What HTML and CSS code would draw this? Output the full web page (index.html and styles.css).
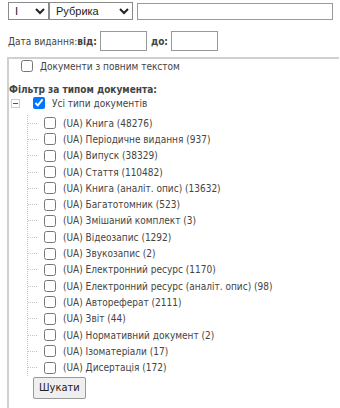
FILE: index.html
```html
<!DOCTYPE html>
<html>
<head>
	<meta charset="utf-8">
	<title>Пошук</title>
	<link rel="stylesheet" href="styles.css">
</head>
<body>
	<form class="search">
		<div class="search__row">
			<select class="search__field"><option>І</option></select>
			<select class="search__kind"><option>Рубрика</option></select>
			<input type="text" class="search__query">
		</div>

		<div class="search__dates">
			<span>Дата видання:</span><b>від:</b>
			<input type="text" class="search__date">
			<b>до:</b>
			<input type="text" class="search__date">
		</div>

		<fieldset class="filter">
			<label class="filter__full"><input type="checkbox"> Документи з повним текстом</label>
			<div class="filter__title">Фільтр за типом документа:</div>

			<div class="tree">
				<div class="tree__root">
					<svg class="tree__toggle" width="9" height="9" viewBox="0 0 9 9">
						<rect x="0.5" y="0.5" width="8" height="8" fill="#fff" stroke="#999" stroke-dasharray="1 1"/>
						<path d="M2 4.5h5" stroke="#555"/>
					</svg>
					<label><input type="checkbox" checked> Усі типи документів</label>
				</div>
				<ul class="tree__list">
					<li><label><input type="checkbox"> (UA) Книга (48276)</label></li>
					<li><label><input type="checkbox"> (UA) Періодичне видання (937)</label></li>
					<li><label><input type="checkbox"> (UA) Випуск (38329)</label></li>
					<li><label><input type="checkbox"> (UA) Стаття (110482)</label></li>
					<li><label><input type="checkbox"> (UA) Книга (аналіт. опис) (13632)</label></li>
					<li><label><input type="checkbox"> (UA) Багатотомник (523)</label></li>
					<li><label><input type="checkbox"> (UA) Змішаний комплект (3)</label></li>
					<li><label><input type="checkbox"> (UA) Відеозапис (1292)</label></li>
					<li><label><input type="checkbox"> (UA) Звукозапис (2)</label></li>
					<li><label><input type="checkbox"> (UA) Електронний ресурс (1170)</label></li>
					<li><label><input type="checkbox"> (UA) Електронний ресурс (аналіт. опис) (98)</label></li>
					<li><label><input type="checkbox"> (UA) Автореферат (2111)</label></li>
					<li><label><input type="checkbox"> (UA) Звіт (44)</label></li>
					<li><label><input type="checkbox"> (UA) Нормативний документ (2)</label></li>
					<li><label><input type="checkbox"> (UA) Ізоматеріали (17)</label></li>
					<li><label><input type="checkbox"> (UA) Дисертація (172)</label></li>
				</ul>
			</div>

			<button type="button" class="filter__submit">Шукати</button>
		</fieldset>
	</form>
</body>
</html>
```

FILE: styles.css
```css
body {
	font-family: "DejaVu Sans Condensed", "DejaVu Sans", sans-serif;
	font-size: 10px;
	color: #444;
	background-color: #fff;
	margin: 0;
	overflow: hidden;
}

.search__row {
	display: flex;
	align-items: center;
	padding: 2px 0 0 8px;
}

select, input[type=text] {
	font-family: "Liberation Sans", sans-serif;
	font-size: 11px;
	color: #222;
	box-sizing: border-box;
	margin: 0;
}

select {
	height: 18px;
	border: 1px solid #8a8a8a;
	border-radius: 0;
	background: #fff;
	padding: 0 2px;
}

.search__field {
	width: 41px;
}

.search__kind {
	width: 84px;
}

input[type=text] {
	height: 17px;
	border: 1px solid #999;
	padding: 0 2px;
}

.search__row .search__query {
	width: 196px;
	margin-left: 4px;
}

.search__dates {
	display: flex;
	align-items: center;
	padding: 11px 0 0 8px;
}

.search__dates b {
	margin-right: 3px;
}

.search__dates .search__date {
	width: 47px;
	height: 20px;
	margin-right: 4px;
}

.filter {
	margin: 6px 0 0 7px;
	width: 330px;
	border: 2px solid #d0d0d0;
	border-right: 0;
	padding: 1px 0 24px 0;
}

.filter label {
	display: inline-flex;
	align-items: center;
}

input[type=checkbox] {
	width: 12px;
	height: 12px;
	margin: 0 7px 0 0;
}

.filter__full {
	padding-left: 12px;
}

.filter__title {
	font-weight: bold;
	margin: 10px 0 0 0;
}

.tree__root {
	display: flex;
	align-items: center;
	height: 16px;
	padding-left: 2px;
}

.tree__toggle {
	flex: none;
	margin-right: 13px;
}

.tree__list {
	list-style: none;
	margin: 4px 0 0 18px;
	padding: 0;
	border-left: 1px dotted #c4c4c4;
}

.tree__list li {
	display: flex;
	align-items: center;
	height: 16.3px;
}

.tree__list li::before {
	content: "";
	width: 9px;
	border-top: 1px dotted #c4c4c4;
	margin-right: 7px;
}

.filter__submit {
	margin: 1px 0 0 24px;
	padding: 3px 5px 4px;
	font-family: "DejaVu Sans Condensed", "DejaVu Sans", sans-serif;
	font-size: 11px;
	color: #222;
	background: #efefef;
	border: 1px solid #999;
	border-radius: 2px;
}
```
